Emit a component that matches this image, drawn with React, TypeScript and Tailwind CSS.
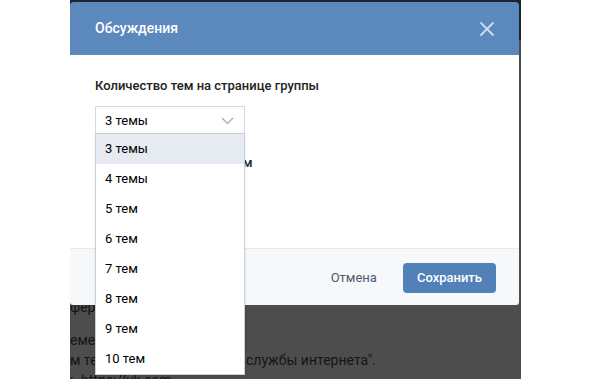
import React from "react";

const items = ["3 темы", "4 темы", "5 тем", "6 тем", "7 тем", "8 тем", "9 тем", "10 тем"];

export default function App() {
  return (
    <div
      className="relative w-[591px] h-[379px] bg-white overflow-hidden"
      style={{ fontFamily: "Roboto, 'Open Sans', Arial, sans-serif" }}
    >
      {/* dimmed page */}
      <div className="ml-[70px] w-[451px] h-full bg-[#4d4d4d] overflow-hidden text-[14px] leading-[20px] text-[#151515]">
        <div className="h-[40px] bg-[#1b2431]" />
        <div className="pt-[257px] whitespace-nowrap">
          <div className="mb-[13px]">фермерских хозяйств</div>
          <div>еменно недоступны</div>
          <div className="flex">
            <span className="w-[176px] overflow-hidden">м технической поддержки</span>
            <span>службы интернета".</span>
          </div>
          <div>ь https://vk.com</div>
        </div>
      </div>

      {/* modal */}
      <div className="absolute left-[70px] top-[2px] w-[449px] rounded-t-[4px] overflow-visible">
        <div className="h-[53px] bg-[#5b88bd] rounded-t-[4px] flex items-center justify-between pl-[25px] pr-[24px]">
          <span className="text-white text-[14px] font-medium">Обсуждения</span>
          <svg width="14" height="14" viewBox="0 0 14 14" className="mr-[1px]">
            <path d="M1 1 L13 13 M13 1 L1 13" stroke="#cfdcec" strokeWidth="1.8" strokeLinecap="round" />
          </svg>
        </div>
        <div className="relative bg-white h-[193px] px-[25px] pt-[22px]">
          <div className="text-[13px] leading-[18px] font-medium text-[#222]">
            Количество тем на странице группы
          </div>
          <div className="mt-[11px] w-[150px] h-[30px] border border-[#d3d9de] flex items-center justify-between pl-[9px] pr-[10px] text-[13px] text-[#000]">
            <span>3 темы</span>
            <svg width="13" height="8" viewBox="0 0 13 8">
              <path d="M1 1 L6.5 6.5 L12 1" fill="none" stroke="#a7b0bb" strokeWidth="1.3" />
            </svg>
          </div>
          <div className="mt-[18px] pl-[6px] text-[13px] leading-[18px] font-medium text-[#222]">
            Сортировать по ответам
          </div>

          {/* dropdown */}
          <div className="absolute left-[25px] top-[78px] w-[150px] bg-white border border-[#c5d0db] shadow-[0_1px_3px_rgba(0,0,0,0.1)] z-10">
            {items.map((t, i) => (
              <div
                key={t}
                className={
                  i === 0
                    ? "h-[30px] flex items-center pl-[9px] text-[13px] text-[#000] bg-[#e5ebf1]"
                    : "h-[30px] flex items-center pl-[9px] text-[13px] text-[#000]"
                }
              >
                {t}
              </div>
            ))}
          </div>
        </div>
        <div className="h-[57px] bg-[#f7f8fa] border-t border-[#e7e8ec] flex items-start justify-end pt-[14px] pr-[23px] gap-[10px] rounded-b-[3px]">
          <button className="h-[30px] px-[16px] text-[13px] text-[#4a5b70]">Отмена</button>
          <button className="h-[30px] px-[14px] rounded-[4px] bg-[#5181b8] text-white text-[13px] font-medium">
            Сохранить
          </button>
        </div>
      </div>
    </div>
  );
}
